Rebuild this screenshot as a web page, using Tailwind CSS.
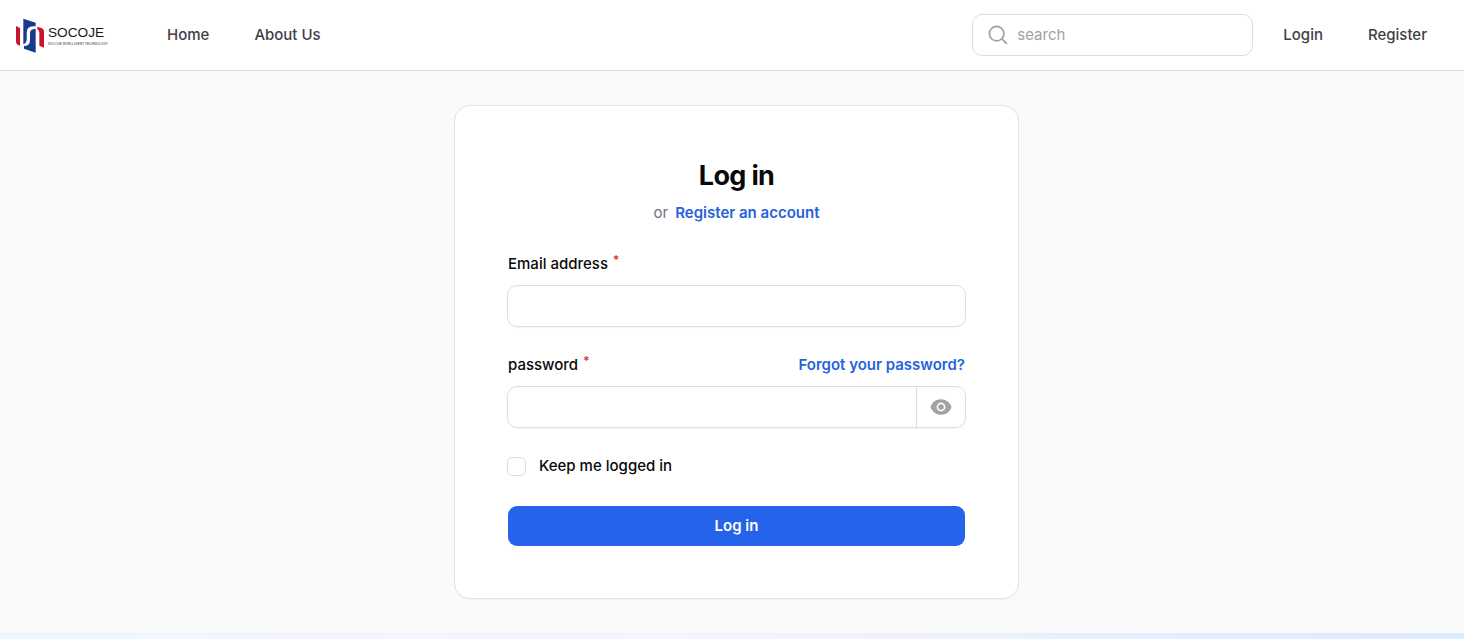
<!DOCTYPE html>
<html lang="en">
<head>
<meta charset="utf-8">
<meta name="viewport" content="width=device-width, initial-scale=1">
<title>Log in - SOCOJE</title>
<script src="https://cdn.jsdelivr.net/npm/@tailwindcss/browser@4"></script>
</head>
<body class="flex min-h-screen flex-col bg-[#fafafa] font-['Inter',sans-serif] text-[15px] leading-6 text-zinc-950">
<header class="flex h-[71px] items-center border-b border-[#dedee0] bg-white px-4">
  <a href="#" aria-label="SOCOJE home">
    <svg class="block h-9 w-[92px]" viewBox="0 0 276 108">
      <path fill="#c8152d" d="M0 27l12 6v53L5 83q-5-3-5-9z"/>
      <path fill="#173a8c" d="M22 5l37 12v11q-17-2-23 6-4 5-4 14v19q0 12-10 14z"/>
      <path fill="#173a8c" d="M59 35v72L24 95v-8q18 0 18-19V48q0-12 17-13z"/>
      <path fill="#c8152d" d="M64 29l14 5q6 3 6 10v48l-14-6V48q0-9-6-11z"/>
      <text x="96" y="61" font-family="Liberation Sans, sans-serif" font-size="41" fill="#161616">SOCOJE</text>
      <text x="96" y="84" font-family="Liberation Sans, sans-serif" font-size="10" fill="#333">SOCOJE INTELLIGENT TECHNOLOGY</text>
    </svg>
  </a>
  <nav class="ml-[59px] flex gap-[45px] font-medium text-[#3f3f46]">
    <a href="#">Home</a>
    <a href="#">About Us</a>
  </nav>
  <div class="ml-auto flex items-center">
    <div class="flex h-[42px] w-[281px] items-center gap-2 rounded-[10px] border border-[#dedee0] px-[14px]">
      <svg class="size-[22px] shrink-0 text-[#a1a1a6]" viewBox="0 0 24 24" fill="none" stroke="currentColor" stroke-width="1.900" stroke-linecap="round"><circle cx="10.500" cy="10.500" r="7.900"/><path d="M16.200 16.200l5 5"/></svg>
      <input type="search" aria-label="Search" placeholder="search" class="h-6 w-full min-w-0 outline-none placeholder:text-[#a1a1a6]">
    </div>
    <nav class="mr-[21px] ml-[30px] flex gap-[45px] font-medium text-[#3f3f46]">
      <a href="#">Login</a>
      <a href="#">Register</a>
    </nav>
  </div>
</header>
<main class="flex grow justify-center py-[34px] pl-[9px]">
  <form class="w-full max-w-[565px] rounded-2xl border border-[#e4e4e7] bg-white px-[52px] py-[52px] shadow-[0_1px_1px_rgba(0,0,0,0.04)]">
    <h1 class="text-center text-[27px] leading-9 font-bold tracking-tight">Log in</h1>
    <p class="mt-[7px] flex justify-center gap-[7px] text-zinc-500"><span>or</span><a href="#" class="font-semibold text-[#2563dc]">Register an account</a></p>
    <label for="email" class="mt-[27px] flex pl-px font-medium">Email address<sup class="top-0 ml-[5px] text-xs leading-4 text-[#dc2626]">*</sup></label>
    <input id="email" type="email" required class="mt-[9px] block h-[42px] w-full rounded-[10px] border border-[#dedee0] px-3 shadow-[0_1px_1px_rgba(0,0,0,0.04)] outline-none">
    <div class="mt-[26px] flex justify-between px-px">
      <label for="password" class="flex font-medium">password<sup class="top-0 ml-[5px] text-xs leading-4 text-[#dc2626]">*</sup></label>
      <a href="#" class="font-semibold text-[#2563dc]">Forgot your password?</a>
    </div>
    <div class="mt-[9px] flex h-[42px] rounded-[10px] border border-[#dedee0] shadow-[0_1px_1px_rgba(0,0,0,0.04)]">
      <input id="password" type="password" required class="min-w-0 grow rounded-l-[10px] px-3 outline-none">
      <button type="button" aria-label="Show password" class="flex w-[49px] items-center justify-center border-l border-[#dedee0] text-[#a1a1a6]">
        <svg class="size-[22px]" viewBox="0 0 20 20" fill="currentColor"><path d="M10 12.500a2.500 2.500 0 1 0 0-5 2.500 2.500 0 0 0 0 5Z"/><path fill-rule="evenodd" d="M.664 10.590a1.651 1.651 0 0 1 0-1.186A10.004 10.004 0 0 1 10 3c4.257 0 7.893 2.660 9.336 6.410.147.381.146.804 0 1.186A10.004 10.004 0 0 1 10 17c-4.257 0-7.893-2.660-9.336-6.410ZM14 10a4 4 0 1 1-8 0 4 4 0 0 1 8 0Z"/></svg>
      </button>
    </div>
    <label class="mt-[26px] flex items-center gap-[13px] font-medium">
      <input type="checkbox" class="size-[19px] appearance-none rounded-[5px] border border-[#dedee0] checked:bg-[#2563eb]">Keep me logged in</label>
    <button type="submit" class="mx-px mt-[28px] flex h-10 w-[calc(100%-2px)] items-center justify-center rounded-[9px] bg-[#2563eb] pb-px font-semibold text-white">Log in</button>
  </form>
</main>
<footer class="h-[6px] bg-linear-to-r from-[#eff6ff] via-[#f5f3ff] to-[#dbeafe]"></footer>
</body>
</html>
